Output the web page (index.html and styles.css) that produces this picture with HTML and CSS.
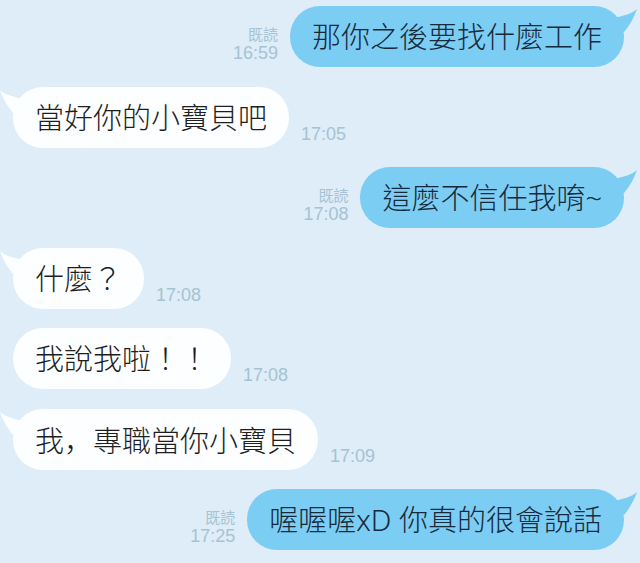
FILE: index.html
```html
<!DOCTYPE html>
<html lang="zh-Hant">
<head>
  <meta charset="UTF-8">
  <title>聊天</title>
  <link rel="stylesheet" href="styles.css">
</head>
<body>
  <div class="chat">
    <div class="row out">
      <div class="meta"><span class="read">既読</span><span class="time">16:59</span></div>
      <div class="bubble">那你之後要找什麼工作<svg class="tail" width="28" height="32" viewBox="0 0 28 32"><path d="M2 12 C10 10 20 8 25 3 C22 12 17 20 12 26 L2 26 Z"/></svg></div>
    </div>

    <div class="row in">
      <div class="bubble">當好你的小寶貝吧<svg class="tail" width="28" height="32" viewBox="0 0 28 32"><path d="M2 12 C10 10 20 8 25 3 C22 12 17 20 12 26 L2 26 Z"/></svg></div>
      <div class="meta"><span class="time">17:05</span></div>
    </div>

    <div class="row out">
      <div class="meta"><span class="read">既読</span><span class="time">17:08</span></div>
      <div class="bubble">這麼不信任我唷~<svg class="tail" width="28" height="32" viewBox="0 0 28 32"><path d="M2 12 C10 10 20 8 25 3 C22 12 17 20 12 26 L2 26 Z"/></svg></div>
    </div>

    <div class="row in">
      <div class="bubble">什麼？<svg class="tail" width="28" height="32" viewBox="0 0 28 32"><path d="M2 12 C10 10 20 8 25 3 C22 12 17 20 12 26 L2 26 Z"/></svg></div>
      <div class="meta"><span class="time">17:08</span></div>
    </div>

    <div class="row in">
      <div class="bubble">我說我啦！！</div>
      <div class="meta"><span class="time">17:08</span></div>
    </div>

    <div class="row in">
      <div class="bubble">我<span class="punct" lang="ja">，</span>專職當你小寶貝<svg class="tail" width="28" height="32" viewBox="0 0 28 32"><path d="M2 12 C10 10 20 8 25 3 C22 12 17 20 12 26 L2 26 Z"/></svg></div>
      <div class="meta"><span class="time">17:09</span></div>
    </div>

    <div class="row out">
      <div class="meta"><span class="read">既読</span><span class="time">17:25</span></div>
      <div class="bubble">喔喔喔xD 你真的很會說話<svg class="tail" width="28" height="32" viewBox="0 0 28 32"><path d="M2 12 C10 10 20 8 25 3 C22 12 17 20 12 26 L2 26 Z"/></svg></div>
    </div>
  </div>
</body>
</html>
```

FILE: styles.css
```css
body {
  margin: 0;
  background-color: #deedf7;
  font-family: "Liberation Sans", "Noto Sans CJK TC", sans-serif;
}
.chat {
  display: flex;
  flex-direction: column;
  gap: 19.5px;
  padding: 6px 16px 0 13px;
}
.row {
  display: flex;
  align-items: flex-end;
  gap: 12px;
}
.row.out {
  justify-content: flex-end;
}
.bubble {
  position: relative;
  height: 61px;
  line-height: 61px;
  padding: 0 22px;
  border-radius: 30px;
  font-family: "Noto Sans", "Noto Sans CJK TC", sans-serif;
  font-size: 29px;
  font-weight: 300;
  white-space: nowrap;
}
.out .bubble {
  background-color: #7ccdf4;
  color: #172a3b;
}
.in .bubble {
  background-color: #fdfeff;
  color: #1e1e1e;
}
.punct {
  font-family: "Noto Sans CJK JP", sans-serif;
}
.tail {
  position: absolute;
  top: 0;
}
.out .tail {
  right: -16px;
  fill: #7ccdf4;
}
.in .tail {
  left: -16px;
  transform: scaleX(-1);
  fill: #fdfeff;
}
.meta {
  display: flex;
  flex-direction: column;
  align-items: flex-end;
  padding-bottom: 4px;
  color: #a6c3d3;
}
.in .meta {
  align-items: flex-start;
}
.read {
  font-family: "Noto Sans CJK TC", sans-serif;
  font-size: 15px;
  line-height: 18px;
}
.time {
  font-size: 18px;
  line-height: 20px;
}
```
